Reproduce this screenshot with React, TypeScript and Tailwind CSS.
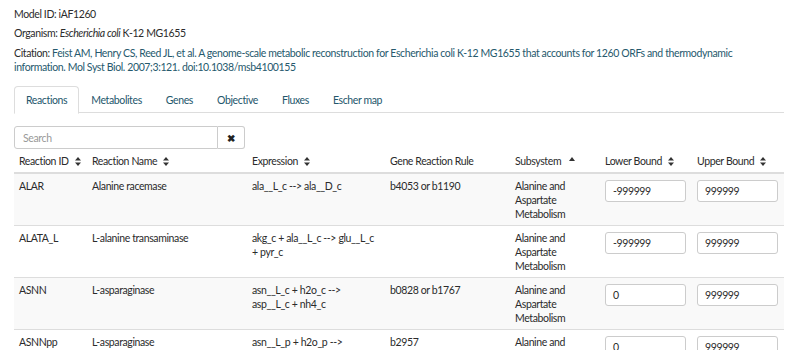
import React from "react";

const SortBoth = () => (
  <svg width="6" height="9" viewBox="0 0 6 9" className="inline-block ml-[6px] align-[-1px]">
    <path d="M0 3.5 L3 0 L6 3.5 Z" fill="#333" />
    <path d="M0 5.5 L3 9 L6 5.5 Z" fill="#333" />
  </svg>
);

const SortUp = () => (
  <svg width="6" height="4" viewBox="0 0 6 4" className="inline-block ml-[8px] align-[4px]">
    <path d="M0 4 L3 0 L6 4 Z" fill="#333" />
  </svg>
);

type Row = {
  id: string;
  name: string;
  expr: React.ReactNode;
  gene: string;
  lower: string;
  upper: string;
};

const rows: Row[] = [
  { id: "ALAR", name: "Alanine racemase", expr: <>ala__L_c --&gt; ala__D_c</>, gene: "b4053 or b1190", lower: "-999999", upper: "999999" },
  { id: "ALATA_L", name: "L-alanine transaminase", expr: <>akg_c + ala__L_c --&gt; glu__L_c<br />+ pyr_c</>, gene: "", lower: "-999999", upper: "999999" },
  { id: "ASNN", name: "L-asparaginase", expr: <>asn__L_c + h2o_c --&gt;<br />asp__L_c + nh4_c</>, gene: "b0828 or b1767", lower: "0", upper: "999999" },
  { id: "ASNNpp", name: "L-asparaginase", expr: <>asn__L_p + h2o_p --&gt;<br />asp__L_p + nh4_p</>, gene: "b2957", lower: "0", upper: "999999" },
];

export default function App() {
  const tabs = ["Reactions", "Metabolites", "Genes", "Objective", "Fluxes", "Escher map"];
  return (
    <div
      className="w-[800px] h-[350px] overflow-hidden bg-white text-[#2b2b2b] text-[10.5px] tracking-[-0.38px] leading-[14px] pl-[14px] pr-[16px] pt-[7px]"
      style={{ fontFamily: "Lato, 'Liberation Sans', sans-serif" }}
    >
      <p className="mb-[5px]">Model ID: iAF1260</p>
      <p className="mb-[6px]">
        Organism: <i>Escherichia coli</i> K-12 MG1655
      </p>
      <p className="mb-[12px] w-[755px]">
        Citation:{" "}
        <span className="text-[#26596d]">
          Feist AM, Henry CS, Reed JL, et al. A genome-scale metabolic reconstruction for Escherichia coli K-12 MG1655 that accounts for 1260 ORFs and thermodynamic information. Mol Syst Biol. 2007;3:121. doi:10.1038/msb4100155
        </span>
      </p>

      <div className="flex border-b border-[#ddd] h-[27px] w-[770px]">
        {tabs.map((t, i) => (
          <div
            key={t}
            className={
              i === 0
                ? "h-[28px] px-[11px] flex items-center border border-[#ddd] border-b-white rounded-t-[4px] bg-white text-[#23566b]"
                : "h-[27px] px-[11px] flex items-center border border-transparent text-[#23566b]"
            }
          >
            {t}
          </div>
        ))}
      </div>

      <div className="mt-[13px] flex w-[231px] h-[23px]">
        <div className="flex-1 border border-[#ccc] rounded-l-[3px] flex items-center pl-[8px] text-[#999]">Search</div>
        <div className="w-[27px] border border-l-0 border-[#ccc] rounded-r-[3px] flex items-center justify-center text-[#222] text-[10px] font-bold">
          ✖
        </div>
      </div>

      <table className="w-[770px] table-fixed border-collapse mt-[1px]">
        <colgroup>
          <col className="w-[73px]" />
          <col className="w-[160px]" />
          <col className="w-[138px]" />
          <col className="w-[125px]" />
          <col className="w-[90px]" />
          <col className="w-[92px]" />
          <col className="w-[92px]" />
        </colgroup>
        <thead>
          <tr className="border-b-2 border-[#ddd]">
            <th className="text-left font-normal px-[5px] pt-[4px] pb-[4px] whitespace-nowrap">Reaction ID<SortBoth /></th>
            <th className="text-left font-normal px-[5px] pt-[4px] pb-[4px] whitespace-nowrap">Reaction Name<SortBoth /></th>
            <th className="text-left font-normal px-[5px] pt-[4px] pb-[4px] whitespace-nowrap">Expression<SortBoth /></th>
            <th className="text-left font-normal px-[5px] pt-[4px] pb-[4px] whitespace-nowrap">Gene Reaction Rule</th>
            <th className="text-left font-normal px-[5px] pt-[4px] pb-[4px] whitespace-nowrap">Subsystem<SortUp /></th>
            <th className="text-left font-normal px-[5px] pt-[4px] pb-[4px] whitespace-nowrap">Lower Bound<SortBoth /></th>
            <th className="text-left font-normal px-[5px] pt-[4px] pb-[4px] whitespace-nowrap">Upper Bound<SortBoth /></th>
          </tr>
        </thead>
        <tbody>
          {rows.map((r, i) => (
            <tr key={r.id} className={(i % 2 === 0 ? "bg-[#f9f9f9] " : "bg-white ") + "border-t border-[#ddd] align-top"}>
              <td className="px-[5px] pt-[5px] pb-[4px]">{r.id}</td>
              <td className="px-[5px] pt-[5px] pb-[4px]">{r.name}</td>
              <td className="px-[5px] pt-[5px] pb-[4px] whitespace-nowrap">{r.expr}</td>
              <td className="px-[5px] pt-[5px] pb-[4px]">{r.gene}</td>
              <td className="px-[5px] pt-[5px] pb-[4px]">
                Alanine and
                <br />
                Aspartate
                <br />
                Metabolism
              </td>
              <td className="px-[5px] pt-[6px] pb-[4px]">
                <div className="w-[81px] h-[22px] border border-[#ccc] rounded-[3px] bg-white flex items-center pl-[7px]">{r.lower}</div>
              </td>
              <td className="px-[5px] pt-[6px] pb-[4px]">
                <div className="w-[81px] h-[22px] border border-[#ccc] rounded-[3px] bg-white flex items-center pl-[7px]">{r.upper}</div>
              </td>
            </tr>
          ))}
        </tbody>
      </table>
    </div>
  );
}
